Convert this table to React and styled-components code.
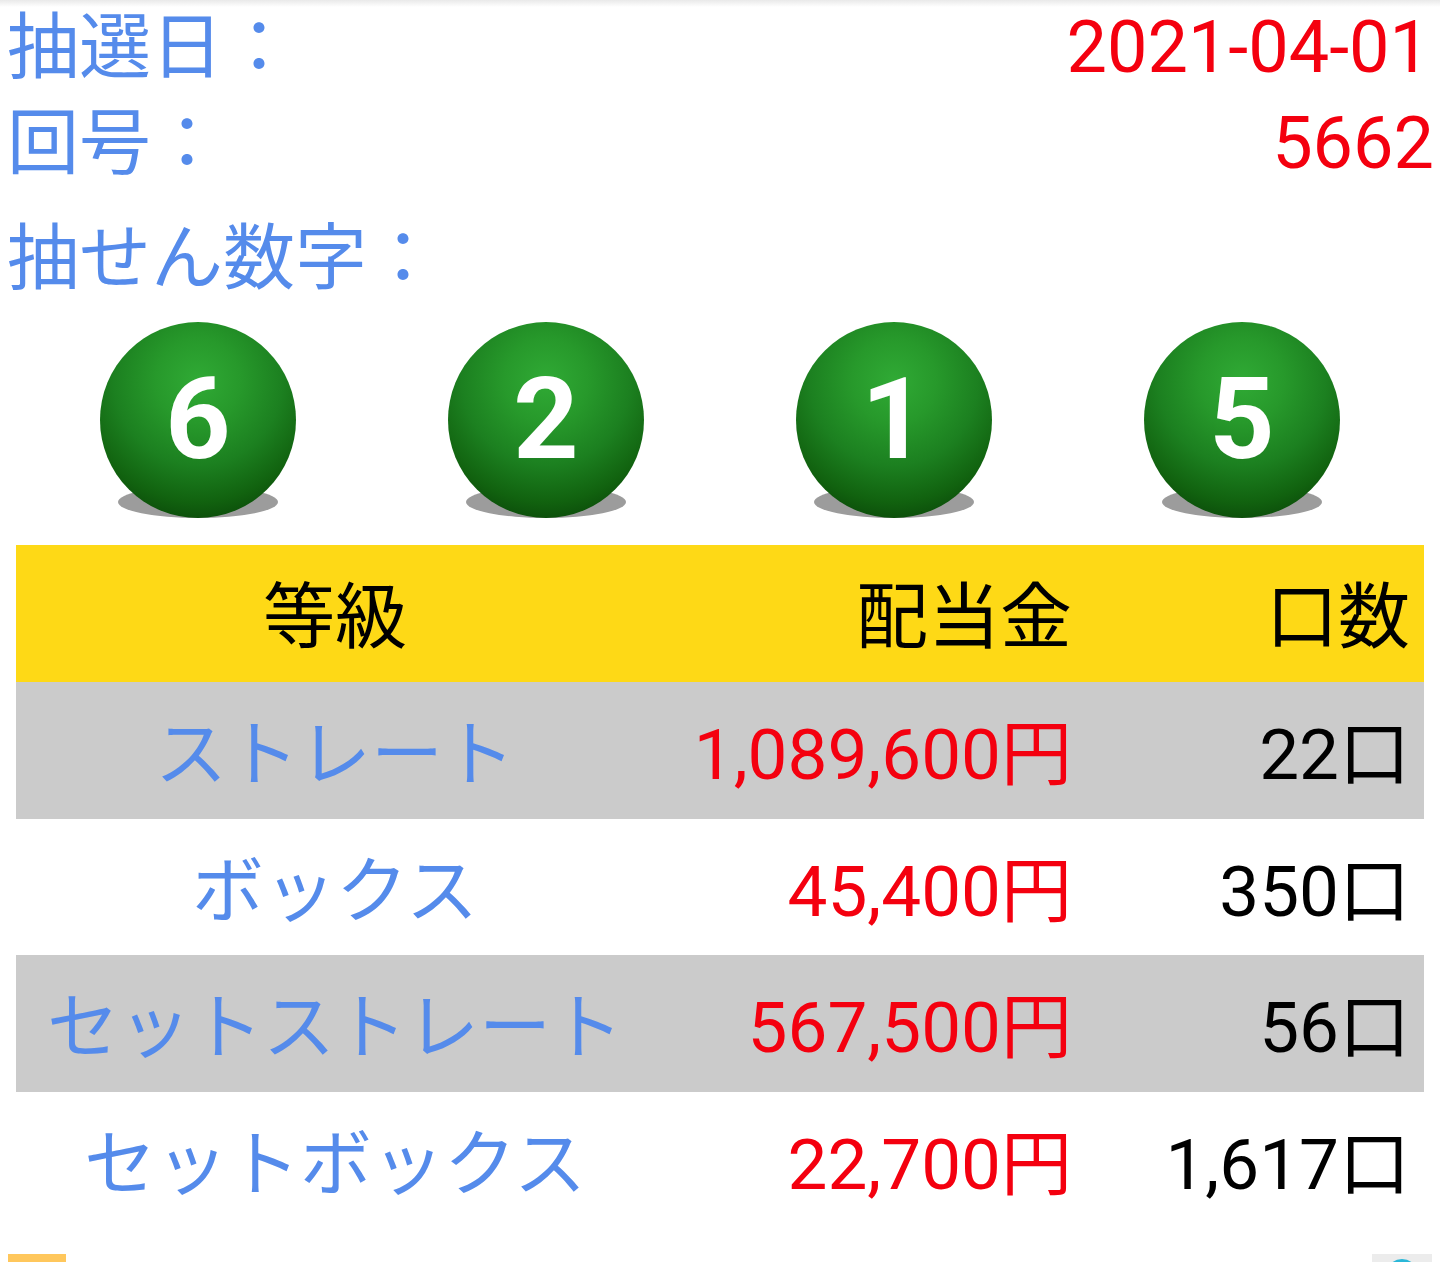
import React from "react";
import styled, { createGlobalStyle } from "styled-components";

const Global = createGlobalStyle`
  html, body { margin: 0; padding: 0; background: #fff; }
  body {
    font-family: Roboto, "Noto Sans CJK JP", sans-serif;
    overflow: hidden;
    height: 1262px;
  }
`;

const Page = styled.div`
  position: relative;
  width: 1440px;
  background: linear-gradient(#e9e9e9 0px, #ffffff 7px) no-repeat;
`;

const InfoRow = styled.div`
  display: flex;
  justify-content: space-between;
  align-items: baseline;
  box-sizing: border-box;
  height: 96px;
  padding: 0 ${(p) => p.$right}px 0 7px;
  font-size: 72px;
  margin-top: ${(p) => p.$top || 0}px;
`;

const Label = styled.span`
  color: #558beb;
  font-family: "Noto Sans CJK JP", sans-serif;
  line-height: 1.14;
  white-space: nowrap;
`;

const Value = styled.span`
  color: #f4000f;
  font-family: Roboto, sans-serif;
  line-height: 1;
`;

const Balls = styled.div`
  display: grid;
  grid-template-columns: repeat(4, 1fr);
  padding: 0 24px;
  margin-top: 15px;
`;

const BallCell = styled.div`
  position: relative;
  display: flex;
  justify-content: center;
  height: 196px;
  &::before {
    content: "";
    position: absolute;
    left: 50%;
    bottom: 0;
    width: 160px;
    height: 32px;
    margin-left: -80px;
    border-radius: 50%;
    background: #9c9c9c;
  }
`;

const Ball = styled.div`
  position: relative;
  width: 196px;
  height: 196px;
  border-radius: 50%;
  background: radial-gradient(
    circle at 50% 30%,
    #30aa35 0%,
    #27992b 25%,
    #1c8020 50%,
    #11620f 72%,
    #083d07 92%,
    #052e05 100%
  );
  display: flex;
  align-items: center;
  justify-content: center;
  color: #fff;
  font-family: Roboto, sans-serif;
  font-weight: 700;
  font-size: 114px;
  line-height: 1;
  padding-bottom: 2px;
  box-sizing: border-box;
`;

const Table = styled.div`
  margin: 27px 16px 0 16px;
`;

const Row = styled.div`
  display: grid;
  grid-template-columns: 638px 418px 1fr;
  align-items: baseline;
  box-sizing: border-box;
  padding-top: 30px;
  height: ${(p) => (p.$head ? 137 : 136.5)}px;
  background: ${(p) => p.$bg};
  font-size: 72px;
  line-height: 1;
`;

const Grade = styled.div`
  text-align: center;
  color: ${(p) => p.$color};
  font-family: "Noto Sans CJK JP", sans-serif;
`;

const Amount = styled.div`
  text-align: right;
  color: ${(p) => p.$color};
  font-size: ${(p) => (p.$cjk ? 72 : 71)}px;
  font-family: ${(p) =>
    p.$cjk ? `"Noto Sans CJK JP", sans-serif` : `Roboto, "Noto Sans CJK JP", sans-serif`};
`;

const Count = styled.div`
  text-align: right;
  padding-right: 14px;
  color: #000;
  font-size: ${(p) => (p.$cjk ? 72 : 71)}px;
  font-family: ${(p) =>
    p.$cjk ? `"Noto Sans CJK JP", sans-serif` : `Roboto, "Noto Sans CJK JP", sans-serif`};
`;

const Footer = styled.div`
  display: flex;
  justify-content: space-between;
  padding: 0 8px;
  margin-top: 26px;
`;

const FooterIconLeft = styled.div`
  width: 58px;
  height: 58px;
  background: #ffc75c;
`;

const FooterIconRight = styled.div`
  position: relative;
  width: 60px;
  height: 58px;
  background: #ececec;
  overflow: hidden;
  &::after {
    content: "";
    position: absolute;
    left: 14px;
    top: 5px;
    width: 32px;
    height: 32px;
    border-radius: 50%;
    background: #2ab7d8;
  }
`;

const rows = [
  { grade: "ストレート", amount: "1,089,600円", count: "22口", bg: "#cbcbcb" },
  { grade: "ボックス", amount: "45,400円", count: "350口", bg: "#ffffff" },
  { grade: "セットストレート", amount: "567,500円", count: "56口", bg: "#cbcbcb" },
  { grade: "セットボックス", amount: "22,700円", count: "1,617口", bg: "#ffffff" },
];

export default function App() {
  return (
    <Page>
      <Global />
      <InfoRow $right={10}>
        <Label>抽選日：</Label>
        <Value>2021-04-01</Value>
      </InfoRow>
      <InfoRow $right={6}>
        <Label>回号：</Label>
        <Value>5662</Value>
      </InfoRow>
      <InfoRow $right={14} $top={19}>
        <Label>抽せん数字：</Label>
      </InfoRow>
      <Balls>
        {[6, 2, 1, 5].map((n, i) => (
          <BallCell key={i}>
            <Ball>{n}</Ball>
          </BallCell>
        ))}
      </Balls>
      <Table>
        <Row $head $bg="#fed916">
          <Grade $color="#000">等級</Grade>
          <Amount $color="#000" $cjk>配当金</Amount>
          <Count $cjk>口数</Count>
        </Row>
        {rows.map((r) => (
          <Row key={r.grade} $bg={r.bg}>
            <Grade $color="#558beb">{r.grade}</Grade>
            <Amount $color="#f4000f">{r.amount}</Amount>
            <Count>{r.count}</Count>
          </Row>
        ))}
      </Table>
      <Footer>
        <FooterIconLeft />
        <FooterIconRight />
      </Footer>
    </Page>
  );
}
